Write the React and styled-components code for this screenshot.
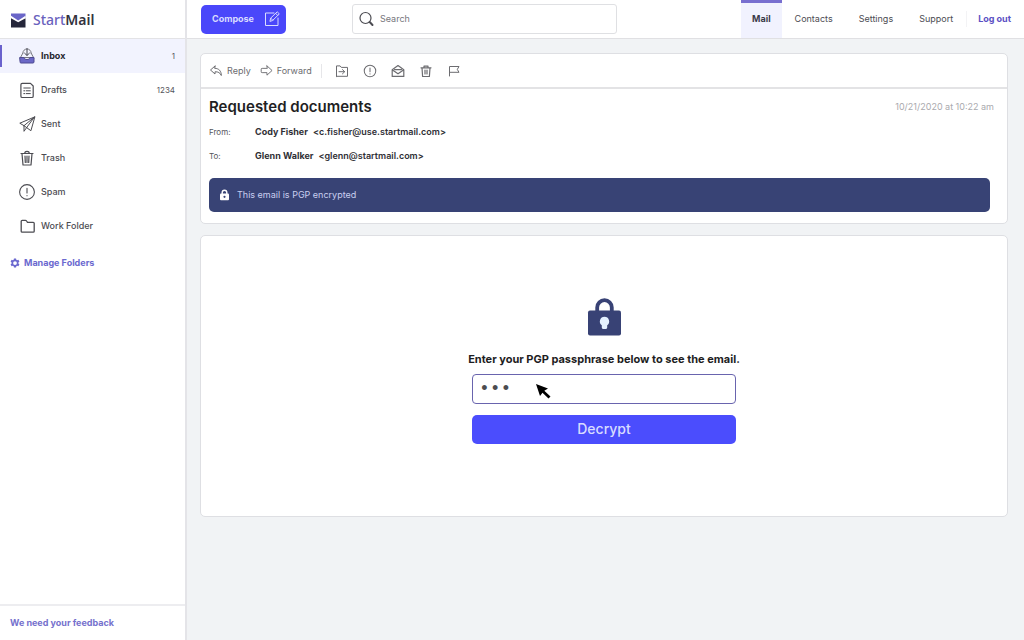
import React from "react";
import styled, { createGlobalStyle, css } from "styled-components";

const GlobalStyle = createGlobalStyle`
  *, *::before, *::after { box-sizing: border-box; }
  body {
    margin: 0;
    background: #f1f3f5;
    color: #4c4c52;
    font-family: Inter, "Liberation Sans", sans-serif;
    font-size: 9px;
    line-height: 14px;
  }
  button, input { font: inherit; }
  a { color: inherit; text-decoration: none; }
  h1, p, dl, dd, ul { margin: 0; padding: 0; }
`;

const Page = styled.div`
  display: grid;
  grid-template-columns: 187px minmax(0, 1fr);
  min-height: 100vh;
`;

/* ---------- Sidebar ---------- */

const Sidebar = styled.aside`
  display: flex;
  flex-direction: column;
  background: #fff;
  border-right: 2px solid #e4e4e8;
`;

const Brand = styled.a`
  display: flex;
  align-items: center;
  gap: 7px;
  height: 39px;
  padding: 2px 10px 0;
  border-bottom: 1px solid #e3e3e6;
  font-family: "Noto Sans", sans-serif;
  font-size: 14px;
  font-weight: 600;
  line-height: 20px;
  color: #33333d;
`;

const BrandAccent = styled.span`
  font-weight: 500;
  color: #6a62bd;
`;

const FolderList = styled.ul`
  list-style: none;
`;

const FolderLink = styled.a`
  display: flex;
  align-items: center;
  gap: 5px;
  height: 34px;
  padding: 0 10px 0 16px;
  border-left: 2px solid transparent;
  font-weight: 500;
  ${(p) =>
    p.$active &&
    css`
      background: #f2f3fe;
      border-image: linear-gradient(transparent 6px, #6a62cc 6px, #6a62cc 28px, transparent 28px) 0 0 0 2;
      color: #26262e;
      font-weight: 700;
    `}
`;

const Count = styled.span`
  margin-left: auto;
  font-size: 8px;
  font-weight: 400;
  color: #55555c;
`;

const ManageLink = styled.a`
  display: flex;
  align-items: center;
  gap: 4px;
  margin-top: 13px;
  padding: 0 10px;
  font-weight: 700;
  color: #6b69cf;
`;

const SidebarFooter = styled.footer`
  display: flex;
  align-items: center;
  height: 36px;
  margin-top: auto;
  padding: 0 10px;
  border-top: 2px solid #ededf0;
  font-weight: 700;
  color: #7571cd;
`;

/* ---------- Top bar ---------- */

const Main = styled.div`
  display: flex;
  flex-direction: column;
  min-width: 0;
`;

const TopBar = styled.header`
  display: flex;
  align-items: center;
  height: 39px;
  padding-left: 14px;
  background: #fff;
  border-bottom: 1px solid #e0e0e3;
`;

const ComposeButton = styled.button`
  display: flex;
  align-items: center;
  justify-content: space-between;
  width: 85px;
  height: 29px;
  padding: 0 5px 0 11px;
  border: 0;
  border-radius: 5px;
  background: #4a47fa;
  color: #d9dcff;
  font-weight: 700;
`;

const SearchBox = styled.label`
  display: flex;
  align-items: center;
  gap: 5px;
  flex: 0 1 265px;
  height: 30px;
  margin-left: 66px;
  padding: 0 6px;
  border: 1px solid #dfe0e3;
  border-radius: 3px;
  color: #4c4c52;
`;

const SearchInput = styled.input`
  flex: 1;
  min-width: 0;
  padding: 0;
  border: 0;
  outline: 0;
  background: transparent;
  color: #46464d;
  &::placeholder { color: #77777d; opacity: 1; }
`;

const TopNav = styled.nav`
  display: flex;
  align-self: stretch;
  margin-left: auto;
`;

const NavLink = styled.a`
  display: flex;
  align-items: center;
  padding: 0 13px 3px;
  border-top: 3px solid transparent;
  ${(p) =>
    p.$active &&
    css`
      padding: 0 11px 3px;
      border-color: #786fd0;
      background: #f1f2fe;
      color: #3a3a4a;
      font-weight: 700;
    `}
  ${(p) =>
    p.$accent &&
    css`
      padding-left: 11px;
      color: #5b50c4;
      font-weight: 700;
    `}
`;

const NavDivider = styled.span`
  align-self: center;
  width: 1px;
  height: 16px;
  background: #f3f3f5;
`;

/* ---------- Message ---------- */

const Content = styled.main`
  display: flex;
  flex-direction: column;
  gap: 11px;
  padding: 14px 16px 14px 13px;
`;

const Card = styled.section`
  background: #fff;
  border: 1px solid #dedfe3;
  border-radius: 5px;
`;

const Toolbar = styled.div`
  display: flex;
  align-items: center;
  height: 35px;
  padding: 0 8px;
  border-bottom: 2px solid #e3e3e5;
`;

const ToolButton = styled.button`
  display: flex;
  align-items: center;
  gap: 4px;
  margin-right: 9px;
  padding: 0;
  border: 0;
  background: none;
  color: #6c6c70;
`;

const Divider = styled.span`
  width: 1px;
  height: 14px;
  margin-right: 13px;
  background: #e6e6e9;
`;

const IconButton = styled(ToolButton)`
  margin-right: 14px;
`;

const Message = styled.div`
  padding: 8px 17px 11px 8px;
`;

const TitleRow = styled.div`
  display: flex;
  align-items: center;
  justify-content: space-between;
`;

const Subject = styled.h1`
  font-size: 15px;
  font-weight: 600;
  line-height: 20px;
  color: #1f1f24;
`;

const Timestamp = styled.time`
  margin-right: -4px;
  color: #aaaaae;
`;

const People = styled.dl`
  display: grid;
  grid-template-columns: 46px 1fr;
  row-gap: 10px;
  margin-top: 8px;
`;

const Role = styled.dt`
  font-size: 8px;
  color: #55555b;
`;

const Person = styled.dd`
  display: flex;
  gap: 5px;
  font-weight: 600;
  color: #303036;
`;

const PersonName = styled.span`
  font-weight: 700;
`;

const Notice = styled.p`
  display: flex;
  align-items: center;
  gap: 7px;
  height: 34px;
  margin-top: 15px;
  padding: 0 10px;
  border-radius: 5px;
  background: #384375;
  color: #c9cff0;
`;

const UnlockCard = styled(Card)`
  display: flex;
  justify-content: center;
  padding: 62px 16px 72px;
`;

const UnlockForm = styled.form`
  display: flex;
  flex-direction: column;
  align-items: center;
  width: 264px;
`;

const PassLabel = styled.label`
  margin-top: 15px;
  font-size: 11px;
  font-weight: 700;
  line-height: 16px;
  white-space: nowrap;
  color: #1d1d22;
`;

const PassField = styled.div`
  position: relative;
  width: 100%;
  margin-top: 7px;
`;

const PassInput = styled.input`
  display: block;
  width: 100%;
  height: 30px;
  padding: 0 6px;
  border: 1px solid #6964ae;
  border-radius: 4px;
  outline: 0;
  background: #fff;
  color: #4c4c50;
  font-family: "Liberation Mono", monospace;
  font-size: 18px;
`;

const Pointer = styled.svg`
  position: absolute;
  left: 63px;
  top: 9px;
  pointer-events: none;
`;

const DecryptButton = styled.button`
  width: 100%;
  height: 29px;
  margin-top: 11px;
  padding: 0 0 2px;
  border: 0;
  border-radius: 5px;
  background: #4b4dfd;
  color: #d8dcff;
  font-size: 14px;
  font-weight: 500;
  line-height: 20px;
`;

/* ---------- Icons ---------- */

const IconSvg = styled.svg`
  flex: none;
`;

const Icon = ({ size = 18, box = 18, width = 1, children }) => (
  <IconSvg
    width={size}
    height={size}
    viewBox={`0 0 ${box} ${box}`}
    fill="none"
    stroke="currentColor"
    strokeWidth={width}
    strokeLinecap="round"
    strokeLinejoin="round"
    aria-hidden="true"
  >
    {children}
  </IconSvg>
);

const LogoMark = () => (
  <svg width="16" height="15" viewBox="0 0 16 15" aria-hidden="true">
    <path d="M1 0.500h14.500v4L8.200 9 1 4.500z" fill="#6a66c8" />
    <path d="M1 2.800l7.200 4.600 7.300-4.600v2.600L8.200 9.600 1 5.400z" fill="#fff" />
    <path d="M1 5.200l7.200 4 7.300-4v9.300H1z" fill="#25263a" />
  </svg>
);

const InboxIcon = () => (
  <Icon>
    <path d="M4.800 6.200L2.200 11M13.200 6.200l2.600 4.800M4.800 6.200C4.800 3.600 6.800 2 9 2s4.200 1.600 4.200 4.200M5.500 10.500h7" stroke="#77777f" />
    <path d="M9 1.500v6.500M6.600 6.200L9 8.500l2.400-2.300" stroke="#44444f" />
    <path d="M2 10.500h3.800c.5 1.300 1.600 2 3.200 2s2.700-.7 3.200-2H16v4.500c0 .6-.4 1-1 1H3c-.6 0-1-.4-1-1z" fill="#6c68c6" stroke="#4e4b92" />
  </Icon>
);

const DraftsIcon = () => (
  <Icon width={1.200}>
    <path d="M4.200 2.400h8.300l2.700 2.600v10.200c0 .8-.5 1.300-1.300 1.300H4.200c-.8 0-1.300-.5-1.300-1.300V3.700c0-.8.500-1.300 1.300-1.300z" />
    <path d="M5.800 7h6.500M5.800 9.800h1M8.300 9.800h4M5.800 12.600h1M8.300 12.600h4" strokeWidth="1" />
  </Icon>
);

const SentIcon = () => (
  <Icon>
    <path d="M16.500 2L1.800 8.200l4.200 2.500 6.600 4.800zM16.500 2L6 10.700M16.500 2L8.700 12.500M6 10.700v5.600l2.700-3.800" />
  </Icon>
);

const TrashIcon = () => (
  <Icon width={1.200}>
    <path d="M3 4.500h12M6.500 4.300c.3-1.400 1.200-2 2.500-2s2.200.6 2.500 2M4 4.700l1 11.300h8l1-11.300" />
    <path d="M7 7l.3 6.500M9 7v6.500M11 7l-.3 6.500" />
  </Icon>
);

const AlertIcon = ({ size }) => (
  <Icon size={size} width={size < 16 ? 1.300 : 1.100}>
    <circle cx="9" cy="9" r="7.400" />
    <path d="M9 5.200v4.800M9 12.500v.2" />
  </Icon>
);

const FolderIcon = () => (
  <Icon width={1.300}>
    <path d="M3.200 14.200V4.300c0-.6.400-1 1-1h3.200c.6 0 .9.200 1.200.7l.9 1.300H15.200c.6 0 1 .4 1 1v7.900c0 .6-.4 1-1 1H4.200c-.6 0-1-.4-1-1z" />
  </Icon>
);

const GearIcon = () => (
  <svg width="10" height="10" viewBox="0 0 24 24" fill="currentColor" aria-hidden="true">
    <path
      fillRule="evenodd"
      d="M9.500 1h5l.7 3.200 1.800 1 3.100-1 2.500 4.300-2.400 2.200v2.600l2.400 2.200-2.500 4.300-3.100-1-1.800 1-.7 3.200h-5l-.7-3.200-1.800-1-3.100 1-2.500-4.300 2.400-2.200v-2.600L1.400 8.500l2.500-4.300 3.100 1 1.800-1zM12 7.500a4.500 4.500 0 100 9 4.500 4.500 0 000-9z"
    />
  </svg>
);

const ComposeIcon = () => (
  <Icon size={18}>
    <path d="M11 3H2.500v12.500H15V8" />
    <path d="M7 11l.7-2.900 6.500-6.300 2.100 2.100-6.500 6.400zM12.600 3.300l2.100 2.100M7.700 8.100l2.100 2.200" />
  </Icon>
);

const SearchIcon = () => (
  <Icon size={16} box={16} width={1.200}>
    <circle cx="6.500" cy="7" r="5.500" />
    <path d="M10.700 11l2.800 3" strokeWidth="2" />
  </Icon>
);

const ReplyIcon = () => (
  <Icon size={14} box={14}>
    <path d="M6 2L1.500 6 6 10V7.800c3.300-.2 5 1 6.300 3.700C12.300 7 10 4.400 6 4.300z" />
  </Icon>
);

const ForwardIcon = () => (
  <Icon size={13} box={14}>
    <path d="M7.500 2L13 7l-5.500 5V9.300H2.300c-.8 0-1-.2-1-.9V5.600c0-.7.300-.9 1-.9h5.200z" />
  </Icon>
);

const MoveIcon = () => (
  <Icon size={14} box={14}>
    <path d="M1.500 12.300V1.900h3.600L6.300 3.400h6.200V12.300h-11zM4 7.700h5.500M7.500 5.600L9.700 7.700l-2.200 2.100" />
  </Icon>
);

const OpenMailIcon = () => (
  <Icon size={14} box={14} width={1.200}>
    <path d="M1.200 5.700L7 1.600l5.800 4.100v6.700H1.200zM1.500 6l5.500 3.800L12.500 6" />
    <path d="M3.500 5.600h7" />
  </Icon>
);

const SmallTrashIcon = () => (
  <Icon size={14} box={14} width={1.200}>
    <path d="M2 3.800h10M5 3.600V2.200h4v1.400M3 3.800l.6 8.700h6.800l.6-8.700" />
    <path d="M6 6v4M8 6v4" />
  </Icon>
);

const FlagIcon = () => (
  <Icon size={14} box={14}>
    <path d="M2.500 12V2.500h9.500L10.300 5.400 12 8.300H2.500" />
  </Icon>
);

const SmallLock = () => (
  <svg width="11" height="12" viewBox="0 0 11 12" aria-hidden="true">
    <path d="M3.200 5V3.600a2.300 2.300 0 014.600 0V5" fill="none" stroke="#fff" strokeWidth="1.400" />
    <rect x="1" y="4.600" width="9" height="6.600" rx="1" fill="#fff" />
    <circle cx="5.500" cy="7.800" r="1.100" fill="#384375" />
  </svg>
);

const LargeLock = () => (
  <svg width="34" height="38" viewBox="0 0 34 38" aria-hidden="true">
    <path d="M10.200 14V9.500a7.300 7.300 0 0114.600 0V14" fill="none" stroke="#384275" strokeWidth="3.800" />
    <rect x="1" y="12.500" width="33" height="25" rx="2" fill="#384275" />
    <path d="M17.500 18.800a4.700 4.700 0 00-2.700 8.500v2.300c0 .8.500 1.300 1.200 1.300h3c.7 0 1.200-.5 1.200-1.300v-2.300a4.700 4.700 0 00-2.700-8.500z" fill="#e4f1ff" />
  </svg>
);

/* ---------- Page ---------- */

const folders = [
  { name: "Inbox", icon: <InboxIcon />, count: 1, active: true },
  { name: "Drafts", icon: <DraftsIcon />, count: 1234 },
  { name: "Sent", icon: <SentIcon /> },
  { name: "Trash", icon: <TrashIcon /> },
  { name: "Spam", icon: <AlertIcon size={18} /> },
  { name: "Work Folder", icon: <FolderIcon /> },
];

export default function App() {
  return (
    <>
      <GlobalStyle />
      <Page>
        <Sidebar>
          <Brand href="#">
            <LogoMark />
            <span>
              <BrandAccent>Start</BrandAccent>Mail
            </span>
          </Brand>
          <nav>
            <FolderList>
              {folders.map((f) => (
                <li key={f.name}>
                  <FolderLink href="#" $active={f.active}>
                    {f.icon}
                    {f.name}
                    {f.count && <Count>{f.count}</Count>}
                  </FolderLink>
                </li>
              ))}
            </FolderList>
            <ManageLink href="#">
              <GearIcon />
              Manage Folders
            </ManageLink>
          </nav>
          <SidebarFooter>
            <a href="#">We need your feedback</a>
          </SidebarFooter>
        </Sidebar>

        <Main>
          <TopBar>
            <ComposeButton type="button">
              Compose
              <ComposeIcon />
            </ComposeButton>
            <SearchBox>
              <SearchIcon />
              <SearchInput type="text" placeholder="Search" aria-label="Search" />
            </SearchBox>
            <TopNav>
              <NavLink href="#" $active>Mail</NavLink>
              <NavLink href="#">Contacts</NavLink>
              <NavLink href="#">Settings</NavLink>
              <NavLink href="#">Support</NavLink>
              <NavDivider />
              <NavLink href="#" $accent>Log out</NavLink>
            </TopNav>
          </TopBar>

          <Content>
            <Card>
              <Toolbar>
                <ToolButton type="button"><ReplyIcon />Reply</ToolButton>
                <ToolButton type="button"><ForwardIcon />Forward</ToolButton>
                <Divider />
                <IconButton type="button" aria-label="Move"><MoveIcon /></IconButton>
                <IconButton type="button" aria-label="Report spam"><AlertIcon size={14} /></IconButton>
                <IconButton type="button" aria-label="Mark unread"><OpenMailIcon /></IconButton>
                <IconButton type="button" aria-label="Delete"><SmallTrashIcon /></IconButton>
                <IconButton type="button" aria-label="Flag"><FlagIcon /></IconButton>
              </Toolbar>
              <Message>
                <TitleRow>
                  <Subject>Requested documents</Subject>
                  <Timestamp>10/21/2020 at 10:22 am</Timestamp>
                </TitleRow>
                <People>
                  <Role>From:</Role>
                  <Person>
                    <PersonName>Cody Fisher</PersonName>
                    <span>&lt;c.fisher@use.startmail.com&gt;</span>
                  </Person>
                  <Role>To:</Role>
                  <Person>
                    <PersonName>Glenn Walker</PersonName>
                    <span>&lt;glenn@startmail.com&gt;</span>
                  </Person>
                </People>
                <Notice>
                  <SmallLock />
                  This email is PGP encrypted
                </Notice>
              </Message>
            </Card>

            <UnlockCard>
              <UnlockForm onSubmit={(e) => e.preventDefault()}>
                <LargeLock />
                <PassLabel htmlFor="passphrase">
                  Enter your PGP passphrase below to see the email.
                </PassLabel>
                <PassField>
                  <PassInput id="passphrase" type="password" defaultValue="key" autoComplete="off" />
                  <Pointer width="17" height="17" viewBox="0 0 17 17" aria-hidden="true">
                    <path d="M1 1l12 4.500-3.700 2.300 6.200 5.700-2 2-6-5.800L5 13z" fill="#000" />
                  </Pointer>
                </PassField>
                <DecryptButton type="submit">Decrypt</DecryptButton>
              </UnlockForm>
            </UnlockCard>
          </Content>
        </Main>
      </Page>
    </>
  );
}
